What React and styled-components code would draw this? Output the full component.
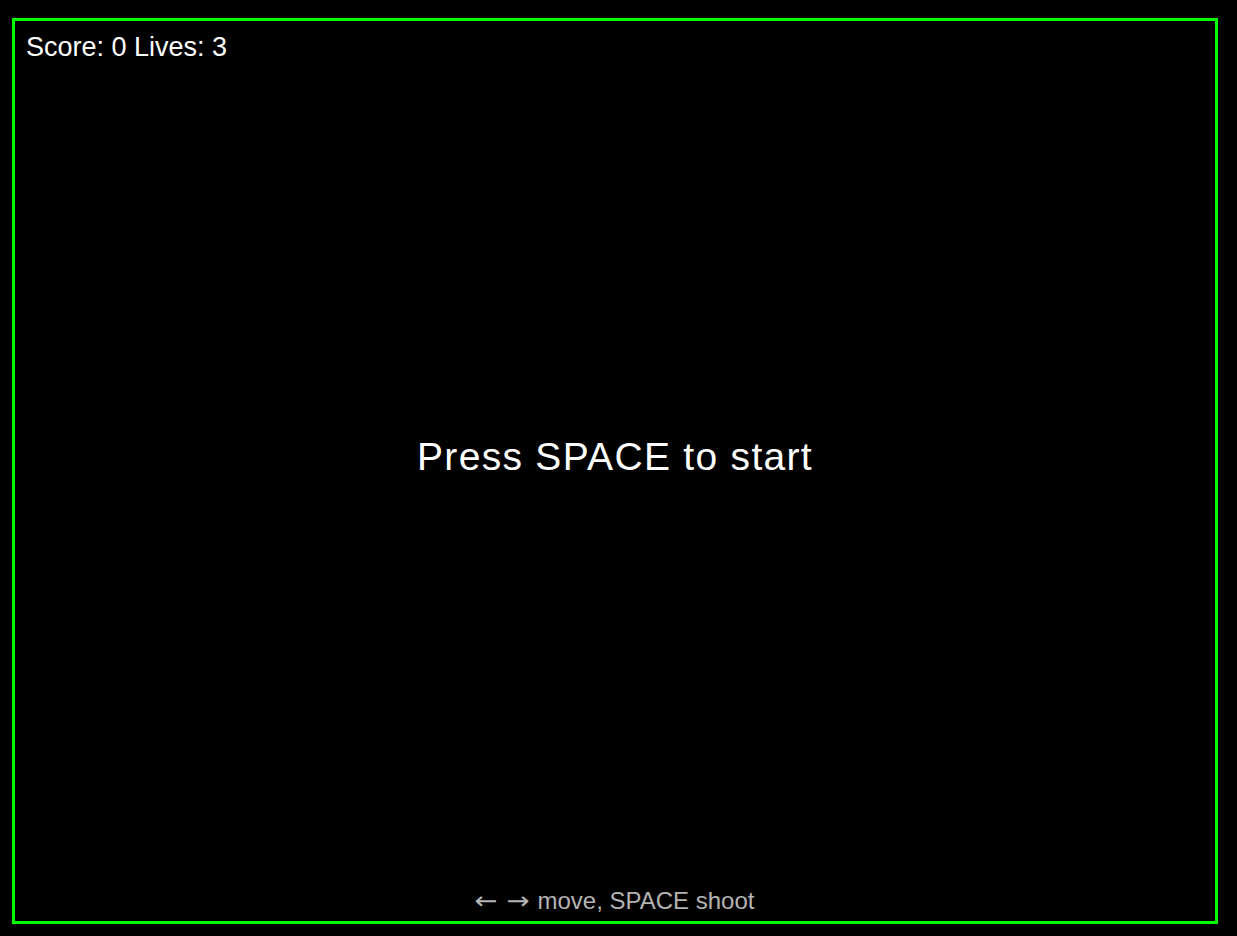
import styled, { createGlobalStyle } from "styled-components";

const GlobalStyle = createGlobalStyle`
  html, body {
    margin: 0;
    background: #000;
  }

  body {
    font-family: "Liberation Sans", Arial, sans-serif;
  }
`;

const Page = styled.div`
  padding: 18px 0 0 12px;
  height: 936px;
  box-sizing: border-box;
`;

const Board = styled.div`
  width: 1200px;
  height: 900px;
  border: 3px solid #00ff00;
  display: flex;
  flex-direction: column;
  color: #fff;
`;

const Hud = styled.div`
  padding: 11px 0 0 11px;
  font-size: 27px;
  line-height: 30px;
`;

const Center = styled.div`
  flex: 1;
  display: flex;
  align-items: center;
  justify-content: center;
  font-size: 39px;
  letter-spacing: 1.3px;
  padding-bottom: 37px;
`;

const Help = styled.div`
  text-align: center;
  font-size: 24px;
  line-height: 26px;
  color: #b4b4b4;
  padding-bottom: 7px;
`;

const Arrow = styled.span`
  display: inline-block;
  font-family: "DejaVu Sans", sans-serif;
  transform: scaleX(1.15);
  margin-right: ${(p) => p.$gap}px;
`;

const App = () => {
  return (
    <>
      <GlobalStyle />
      <Page>
        <Board>
          <Hud>Score: 0 Lives: 3</Hud>
          <Center>Press SPACE to start</Center>
          <Help>
            <Arrow $gap={12}>←</Arrow>
            <Arrow $gap={3}>→</Arrow> move, SPACE shoot
          </Help>
        </Board>
      </Page>
    </>
  );
};

export default App;
